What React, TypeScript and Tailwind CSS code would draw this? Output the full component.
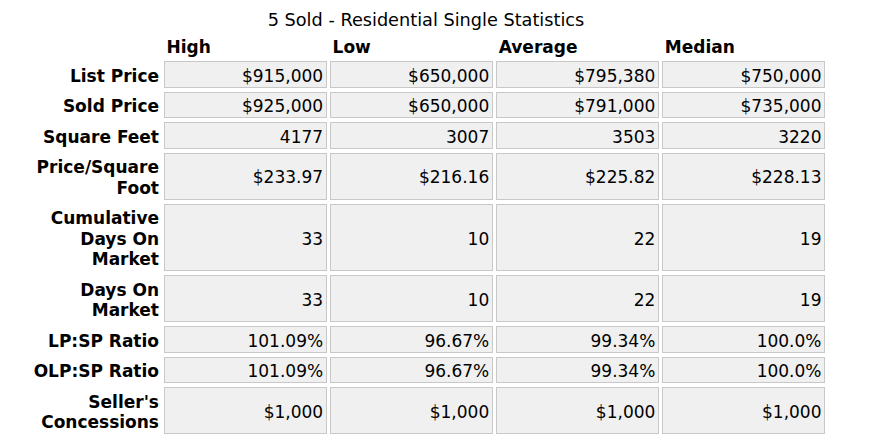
const columns = ['High', 'Low', 'Average', 'Median'];

const rows: { label: string[]; values: string[] }[] = [
  { label: ['List Price'], values: ['$915,000', '$650,000', '$795,380', '$750,000'] },
  { label: ['Sold Price'], values: ['$925,000', '$650,000', '$791,000', '$735,000'] },
  { label: ['Square Feet'], values: ['4177', '3007', '3503', '3220'] },
  { label: ['Price/Square', 'Foot'], values: ['$233.97', '$216.16', '$225.82', '$228.13'] },
  { label: ['Cumulative', 'Days On', 'Market'], values: ['33', '10', '22', '19'] },
  { label: ['Days On', 'Market'], values: ['33', '10', '22', '19'] },
  { label: ['LP:SP Ratio'], values: ['101.09%', '96.67%', '99.34%', '100.0%'] },
  { label: ['OLP:SP Ratio'], values: ['101.09%', '96.67%', '99.34%', '100.0%'] },
  { label: ["Seller's", 'Concessions'], values: ['$1,000', '$1,000', '$1,000', '$1,000'] },
];

export default function App() {
  return (
    <div className="h-[440px] w-[874px] overflow-hidden bg-white font-['Verdana','DejaVu_Sans',sans-serif] text-[17px] leading-[20.5px] text-black">
      <table className="ml-[24px] mt-[10px] w-[804px] table-fixed border-separate border-spacing-x-[3.5px] border-spacing-y-[4px]">
        <caption className="text-center text-[17.7px] font-normal">
          5 Sold - Residential Single Statistics
        </caption>
        <colgroup>
          <col className="w-[133px]" />
          <col className="w-[162.5px]" />
          <col className="w-[162.5px]" />
          <col className="w-[162.5px]" />
          <col className="w-[162.5px]" />
        </colgroup>
        <thead>
          <tr>
            <th className="p-0" />
            {columns.map((c) => (
              <th key={c} className="pb-0 pl-[3px] pr-[2px] pt-[2px] text-left font-bold">
                {c}
              </th>
            ))}
          </tr>
        </thead>
        <tbody>
          {rows.map((r) => (
            <tr key={r.label.join(' ')}>
              <th className="pb-[1.5px] pl-0 pr-[1.5px] pt-[4.5px] text-right align-middle font-bold">
                {r.label.map((l) => (
                  <div key={l} className="whitespace-nowrap">
                    {l}
                  </div>
                ))}
              </th>
              {r.values.map((v, i) => (
                <td
                  key={i}
                  className="border border-[#c8c8c8] bg-[#f0f0f0] pb-[0.5px] pl-[2px] pr-[2.5px] pt-[3.5px] text-right align-middle"
                >
                  {v}
                </td>
              ))}
            </tr>
          ))}
        </tbody>
      </table>
    </div>
  );
}
